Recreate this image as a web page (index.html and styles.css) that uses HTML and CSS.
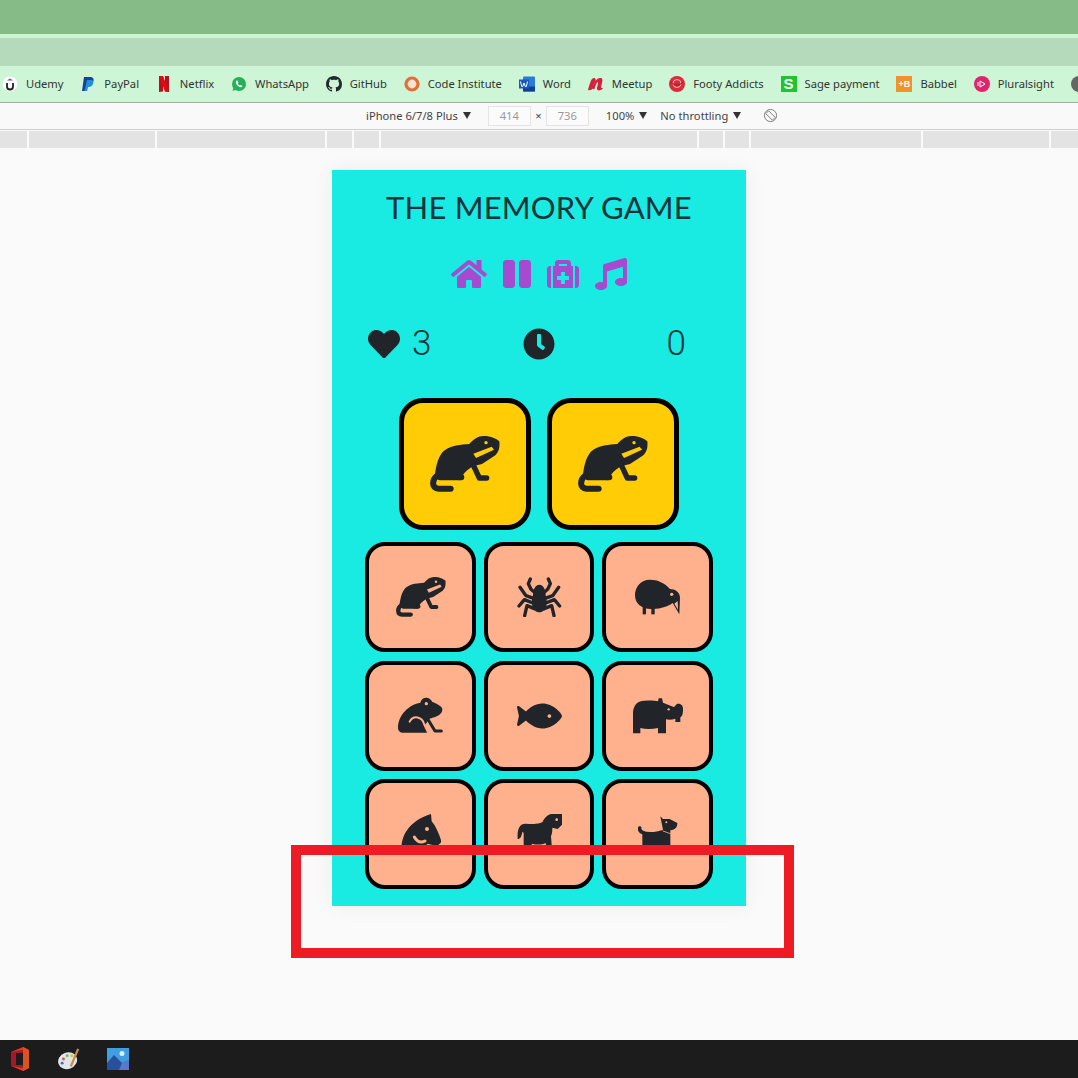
FILE: index.html
```html
<!DOCTYPE html>
<html lang="en">
<head>
  <meta charset="UTF-8">
  <title>The Memory Game</title>
  <link rel="stylesheet" href="styles.css">
</head>
<body>

  <svg class="defs" width="0" height="0">
    <symbol id="otter" viewBox="120 138 210 168">
      <path d="M280 138C264 138 250 148 238 162C212 164 184 166 165 180C147 193 138 222 134 262L210 271C222 244 240 234 252 228L276 222L316 196C326 186 330 174 328 154C318 146 305 138 280 138Z"/>
      <path class="limb" stroke-width="18" d="M182 296H145C125 296 125 270 140 258M150 262H214"/>
      <path class="limb" stroke-width="16" d="M245 215L268 264H290"/>
      <path class="cut" d="M250 191L305 170L312 179L258 204Z"/>
      <circle class="cut" cx="288" cy="158" r="5"/>
    </symbol>
  </svg>

  <div class="topbar"></div>
  <div class="tabbar"></div>

  <div class="bookmarks">
    <div class="bm"><svg viewBox="0 0 16 16"><circle cx="8" cy="8" r="7.500" fill="#fff"/><path d="M5 7v3.500a3 3 0 0 0 6 0V7" fill="none" stroke="#222" stroke-width="1.800"/><path d="M8 2.500L11 4.500H5Z" fill="#8a3ab9"/></svg><span>Udemy</span></div>
    <div class="bm"><svg viewBox="0 0 16 16"><path d="M4 1h6c3 0 4 2 3.500 4-.5 2.500-2.500 3.500-5 3.500H7L6 15H2Z" fill="#1a3f9c"/><path d="M7 4h5c1.500 1 1.500 2.500 1 4-.5 2-2.500 3-4.500 3H8l-.8 4H4.500Z" fill="#1f90d8"/></svg><span>PayPal</span></div>
    <div class="bm"><svg viewBox="0 0 16 16"><path d="M3 0h4l2 7V0h4v16l-4-.6L7 8v7.600L3 16Z" fill="#b5121b"/><path d="M3 0h4l6 16-4-.6Z" fill="#e50914"/></svg><span>Netflix</span></div>
    <div class="bm"><svg viewBox="0 0 16 16"><circle cx="8" cy="8" r="7" fill="#25b15a"/><path d="M1.500 15l1.200-4.500 2.800 3Z" fill="#25b15a"/><path d="M5.500 4.500c-1.500 1.500-.5 3.500 1 5s3.500 2.500 5 1l-1.500-1.500-1.200.6c-1-.5-1.500-1-2-2l.6-1.200L6.500 4.500Z" fill="#fff"/></svg><span>WhatsApp</span></div>
    <div class="bm"><svg viewBox="0 0 16 16"><path fill="#24292e" d="M8 0C3.580 0 0 3.580 0 8c0 3.540 2.290 6.530 5.470 7.590.4.070.55-.17.55-.38 0-.19-.01-.82-.01-1.490-2.010.37-2.530-.49-2.690-.94-.09-.23-.48-.94-.82-1.130-.28-.15-.68-.52-.01-.53.63-.01 1.080.58 1.230.82.72 1.210 1.870.87 2.330.66.07-.52.28-.87.51-1.070-1.780-.2-3.640-.89-3.640-3.950 0-.87.31-1.590.82-2.150-.08-.2-.36-1.020.08-2.120 0 0 .67-.21 2.200.82.640-.18 1.320-.27 2-.27s1.360.09 2 .27c1.530-1.040 2.200-.82 2.200-.82.44 1.100.16 1.920.08 2.120.51.56.82 1.270.82 2.150 0 3.070-1.870 3.750-3.650 3.950.29.25.54.73.54 1.480 0 1.070-.01 1.930-.01 2.200 0 .21.15.46.55.38A8.010 8.010 0 0 0 16 8c0-4.420-3.580-8-8-8z"/></svg><span>GitHub</span></div>
    <div class="bm"><svg viewBox="0 0 16 16"><circle cx="8" cy="8" r="6" fill="#fbe3cf" stroke="#e0703a" stroke-width="3.200"/></svg><span>Code Institute</span></div>
    <div class="bm"><svg viewBox="0 0 16 16"><rect x="4" y="0.500" width="12" height="15" rx="1" fill="#2b7cd3"/><rect x="4" y="10.500" width="12" height="5" fill="#103f91"/><rect x="0" y="3.500" width="10" height="9" fill="#185abd"/><path d="M1.500 5.500l1.200 5h1l1.300-3.500 1.300 3.500h1l1.200-5" fill="none" stroke="#fff" stroke-width="1"/></svg><span>Word</span></div>
    <div class="bm"><svg viewBox="0 0 16 16"><path d="M0 14C2 7 3 2 6 2c1.500 0 2 1.500 1.700 3C9 2.500 11 1.500 13 2c2 .7 1.500 3 1 5l-1 4c-.2 1 .5 1.300 2 1-1 2.500-5.500 3.500-6 1-.3-1.500 1.500-6 1-7-.7-.5-2.500 3-3.500 7-1.500.5-2.200 0-2-1.500L7 6c-1 1-2 5-3 7.500-1.500.8-3.500 1-4 .5Z" fill="#d3213f"/></svg><span>Meetup</span></div>
    <div class="bm"><svg viewBox="0 0 16 16"><circle cx="8" cy="8" r="8" fill="#d92b3a"/><circle cx="8" cy="7.500" r="4" fill="none" stroke="#f6b9bd" stroke-width="1"/><path d="M2 6c3 4 9 4 12 0" fill="none" stroke="#a81622" stroke-width="1"/></svg><span>Footy Addicts</span></div>
    <div class="bm"><div class="logo-tile sage">S</div><span>Sage payment</span></div>
    <div class="bm"><div class="logo-tile babbel">+B</div><span>Babbel</span></div>
    <div class="bm"><svg viewBox="0 0 16 16"><circle cx="8" cy="8" r="8" fill="#e0246c"/><path d="M6 5l5 3-5 3Z" fill="none" stroke="#fff" stroke-width="1"/><path d="M4 6v4" stroke="#fff" stroke-width="1"/></svg><span>Pluralsight</span></div>
    <div class="bm"><svg viewBox="0 0 16 16"><circle cx="8" cy="8" r="8" fill="#666"/></svg></div>
  </div>

  <div class="devbar">
    <span>iPhone 6/7/8 Plus</span><i class="caret"></i>
    <span class="dim-box first">414</span>
    <span class="times">×</span>
    <span class="dim-box">736</span>
    <span class="zoom-val">100%</span><i class="caret"></i>
    <span class="throttle">No throttling</span><i class="caret"></i>
    <svg class="rotate" viewBox="0 0 16 16"><circle cx="8" cy="8" r="6.500" fill="none" stroke="#777"/><path d="M3 6L6 3L13 10L10 13Z" fill="#f9f9f9" stroke="#777"/></svg>
  </div>

  <div class="ruler">
    <b style="width:27px"></b><b style="width:126px"></b><b style="width:168px"></b><b style="width:25px"></b><b style="width:25px"></b><b style="width:316px"></b><b style="width:24px"></b><b style="width:24px"></b><b style="width:170px"></b><b style="width:126px"></b><b style="flex:1"></b>
  </div>

  <main class="viewport">
    <section class="phone">
      <h1 class="title">THE MEMORY GAME</h1>

      <div class="controls">
        <svg class="ctl" width="36" height="32" viewBox="0 0 576 512"><path d="M280.37 148.26L96 300.110V464a16 16 0 0 0 16 16l112.060-.29a16 16 0 0 0 15.920-16V368a16 16 0 0 1 16-16h64a16 16 0 0 1 16 16v95.640a16 16 0 0 0 16 16.050L464 480a16 16 0 0 0 16-16V300L295.670 148.260a12.190 12.190 0 0 0-15.300 0zM571.600 251.470L488 182.560V44.050a12 12 0 0 0-12-12h-56a12 12 0 0 0-12 12v72.610L318.470 43a48 48 0 0 0-61 0L4.340 251.470a12 12 0 0 0-1.600 16.900l25.500 31A12 12 0 0 0 45.150 301l235.220-193.740a12.190 12.190 0 0 1 15.300 0L530.900 301a12 12 0 0 0 16.900-1.600l25.500-31a12 12 0 0 0-1.700-16.930z"/></svg>
        <svg class="ctl" width="28" height="32" viewBox="0 0 448 512"><path d="M144 479H48c-26.500 0-48-21.500-48-48V79c0-26.500 21.500-48 48-48h96c26.500 0 48 21.500 48 48v352c0 26.500-21.500 48-48 48zm304-48V79c0-26.500-21.500-48-48-48h-96c-26.500 0-48 21.500-48 48v352c0 26.500 21.500 48 48 48h96c26.500 0 48-21.500 48-48z"/></svg>
        <svg class="ctl" width="32" height="32" viewBox="0 0 512 512"><path d="M96 480h320V128h-32V80c0-26.510-21.490-48-48-48H176c-26.510 0-48 21.490-48 48v48H96v352zm96-384h128v32H192V96zm160 248c0 4.418-3.582 8-8 8h-56v56c0 4.418-3.582 8-8 8h-48c-4.418 0-8-3.582-8-8v-56h-56c-4.418 0-8-3.582-8-8v-48c0-4.418 3.582-8 8-8h56v-56c0-4.418 3.582-8 8-8h48c4.418 0 8 3.582 8 8v56h56c4.418 0 8 3.582 8 8v48zm160-168v256c0 26.510-21.490 48-48 48h-16V128h16c26.510 0 48 21.490 48 48zM64 480H48c-26.510 0-48-21.490-48-48V176c0-26.510 21.490-48 48-48h16v352z"/></svg>
        <svg class="ctl" width="32" height="32" viewBox="0 0 512 512"><path d="M470.380 1.510L150.410 96A32 32 0 0 0 128 126.510v261.410A139 139 0 0 0 96 384c-53 0-96 28.660-96 64s43 64 96 64 96-28.660 96-64V214.320l256-75v184.610a138.400 138.400 0 0 0-32-3.930c-53 0-96 28.660-96 64s43 64 96 64 96-28.650 96-64V32a32 32 0 0 0-41.620-30.490z"/></svg>
      </div>

      <div class="stats">
        <div class="lives">
          <svg width="32" height="32" viewBox="0 0 512 512"><path d="M462.300 62.600C407.500 15.900 326 24.300 275.700 76.200L256 96.500l-19.700-20.300C186.100 24.300 104.500 15.900 49.700 62.600c-62.800 53.600-66.100 149.800-9.900 207.900l193.500 199.800c12.500 12.900 32.800 12.900 45.300 0l193.500-199.800c56.300-58.100 53-154.300-9.800-207.900z"/></svg>
          <span class="num">3</span>
        </div>
        <svg width="32" height="32" viewBox="0 0 512 512"><path d="M256 8C119 8 8 119 8 256s111 248 248 248 248-111 248-248S393 8 256 8zm92.490 313l-20 25a16 16 0 0 1-22.490 2.500l-67-49.720a40 40 0 0 1-15-31.230V112a16 16 0 0 1 16-16h32a16 16 0 0 1 16 16v144l58 42.500a16 16 0 0 1 2.490 22.500z"/></svg>
        <span class="num score">0</span>
      </div>

      <div class="pair">
        <div class="card big"><svg width="70" height="56"><use href="#otter"/></svg></div>
        <div class="card big"><svg width="70" height="56"><use href="#otter"/></svg></div>
      </div>

      <div class="deck">
        <div class="card"><svg width="50" height="40"><use href="#otter"/></svg></div>

        <div class="card">
          <svg width="45" height="40" viewBox="470 110 135 120">
            <path d="M537 133C550 133 556 150 556 165C560 178 560 190 558 198C555 210 545 216 537 216C529 216 519 210 516 198C514 190 514 178 518 165C518 150 524 133 537 133Z"/>
            <path class="limb" stroke-width="10" d="M525 158L512 147L504 130L510 116M549 158L562 147L570 130L564 116M520 174L497 166L479 141M554 174L577 166L595 141M518 188L492 178L476 197M556 188L582 178L598 197M522 205L500 196L493 226M552 205L574 196L581 226"/>
          </svg>
        </div>

        <div class="card">
          <svg width="45" height="40" viewBox="825 110 135 120">
            <path d="M870 118C842 118 825 140 825 165C825 192 848 208 878 206C905 205 925 198 938 188L958 222L960 172C960 155 945 146 930 146C915 128 892 118 870 118Z"/>
            <path class="cut" d="M943 190L953 182L954 208Z"/>
            <rect x="848" y="198" width="10" height="24"/>
            <rect x="874" y="198" width="10" height="24"/>
            <circle class="cut" cx="935" cy="162" r="5"/>
          </svg>
        </div>

        <div class="card">
          <svg width="45" height="40" viewBox="115 110 135 120">
            <path d="M200 115C190 115 185 120 182 130C150 135 115 165 115 205C115 215 122 220 130 220H208L196 196L210 178C235 172 248 165 248 150C248 140 225 130 218 128C214 120 208 115 200 115Z"/>
            <path class="limb" stroke-width="9" d="M206 182L226 215H245"/>
            <path class="cut-line" stroke-width="6" d="M150 187C160 167 188 170 194 196L206 221"/>
            <circle class="cut" cx="200" cy="133" r="5"/>
          </svg>
        </div>

        <div class="card">
          <svg width="45" height="40" viewBox="0 0 576 512"><path d="M327.100 96c-89.970 0-168.540 54.770-212.270 101.630L27.500 131.580c-12.130-9.180-30.240.6-27.140 14.660L24.540 256 .35 365.770c-3.100 14.060 15.010 23.830 27.140 14.660l87.330-66.050C158.550 361.230 237.130 416 327.100 416 464.560 416 576 288 576 256S464.560 96 327.100 96zm87.430 184c-13.250 0-24-10.750-24-24 0-13.260 10.750-24 24-24 13.260 0 24 10.740 24 24 0 13.250-10.750 24-24 24z"/></svg>
        </div>

        <div class="card">
          <svg width="50" height="40" viewBox="818 108 150 120">
            <path d="M852 122C830 122 818 138 818 160V220H840V204C855 208 875 208 893 204V220H917V178C925 180 935 180 945 176V186H960V172C967 168 968 160 968 146C968 134 958 130 950 132C945 135 945 140 940 141L908 128L905 115H895L893 124C880 120 868 122 852 122Z"/>
            <circle class="cut" cx="925" cy="148" r="3.500"/>
          </svg>
        </div>

        <div class="card">
          <svg width="40" height="40" viewBox="360 103 120 120">
            <path d="M450 103L452 125C465 140 475 165 482 187L468 200L440 192C430 205 410 212 396 222H362C356 172 382 124 450 103Z"/>
            <path class="cut-line" stroke-width="9" d="M400 172C408 186 420 190 432 184"/>
            <circle class="cut" cx="438" cy="148" r="6"/>
          </svg>
        </div>

        <div class="card">
          <svg width="45" height="40" viewBox="710 103 135 120">
            <path d="M845 103L818 102C800 104 792 116 786 128C770 136 750 132 735 132C718 132 710 148 712 178C720 178 724 170 726 156L730 160V195L742 222H758L754 192C770 196 785 196 796 190L802 222H816L812 170C816 160 816 152 816 144L832 148L845 135Z"/>
            <circle class="cut" cx="829" cy="120" r="4"/>
          </svg>
        </div>

        <div class="card">
          <svg width="40" height="40" viewBox="1075 103 120 120">
            <path d="M1142 110L1150 118H1170L1193 130C1193 142 1188 150 1172 152V190L1174 222H1155V205H1105V222H1088V155C1110 158 1130 158 1150 150Z"/>
            <path class="limb" stroke-width="11" d="M1092 160C1082 156 1078 152 1080 145"/>
            <path class="cut-line" stroke-width="2.500" d="M1150 154L1172 162"/>
            <circle class="cut" cx="1160" cy="128" r="3"/>
          </svg>
        </div>
      </div>
    </section>

    <div class="highlight"></div>
  </main>

  <footer class="taskbar">
    <svg width="20" height="24" viewBox="0 0 20 24"><path d="M1 5L13 0L19 3V21L13 24L1 19Z" fill="#d83b28"/><path d="M13 0L19 3V21L13 24Z" fill="#d9541e"/><path d="M1 5L13 3V21L1 19Z" fill="#a3182a"/><rect x="6" y="6" width="7" height="12" fill="#1c1c1c"/></svg>
    <svg width="22" height="24" viewBox="0 0 24 24"><ellipse cx="10.500" cy="14" rx="10.500" ry="9" fill="#dfe6ec" transform="rotate(-20 10 14)"/><circle cx="6" cy="12" r="1.600" fill="#d9534f"/><circle cx="10" cy="8.500" r="1.600" fill="#6fbf4a"/><circle cx="15" cy="8.500" r="1.600" fill="#e8b93c"/><circle cx="4.500" cy="16.500" r="1.600" fill="#3f6fb5"/><path d="M22 1L14 20" stroke="#c58b4a" stroke-width="2.500"/></svg>
    <svg width="22" height="22" viewBox="0 0 22 22"><rect width="22" height="22" fill="#3f9fe0"/><path d="M0 22V15L7 7L15 15L22 12V22Z" fill="#2a4f9c"/><path d="M15 15L22 12V22H12Z" fill="#5c77cc"/><circle cx="15" cy="5.500" r="2.500" fill="#d8eefb"/></svg>
  </footer>

</body>
</html>
```

FILE: styles.css
```css
html, body {
  margin: 0;
  padding: 0;
  height: 100%;
  overflow: hidden;
}
body {
  display: flex;
  flex-direction: column;
  font-family: "Noto Sans", "Open Sans", sans-serif;
  font-size: 11.2px;
  color: #333;
  background: #fafafa;
}
.defs {
  position: absolute;
}

/* browser chrome */
.topbar {
  height: 34px;
  background: #86ba86;
  border-bottom: 4px solid #ccf5d4;
}
.tabbar {
  height: 28px;
  background: #b5d9bb;
}
.bookmarks {
  display: flex;
  align-items: center;
  gap: 16.8px;
  height: 35px;
  padding: 0 0 1px 2px;
  background: #cdf5d6;
  border-bottom: 1px solid #a4b0a6;
  white-space: nowrap;
  overflow: hidden;
}
.bm {
  display: flex;
  align-items: center;
  gap: 8px;
  flex-shrink: 0;
}
.bm svg {
  width: 16px;
  height: 16px;
}
.logo-tile {
  width: 16px;
  height: 16px;
  color: #fff;
  font-family: "Liberation Sans", sans-serif;
  font-weight: 700;
  text-align: center;
  line-height: 16px;
}
.sage {
  background: #1fc42f;
  font-size: 15px;
}
.babbel {
  background: #f0932b;
  font-size: 9px;
}
.devbar {
  display: flex;
  align-items: center;
  height: 25px;
  padding: 0 0 1px 366px;
  background: #f9f9f9;
  border-bottom: 1px solid #cfcfcf;
  color: #444;
}
.caret {
  width: 0;
  height: 0;
  margin-left: 5px;
  border-left: 4px solid transparent;
  border-right: 4px solid transparent;
  border-top: 7px solid #333;
}
.dim-box {
  width: 41px;
  height: 18px;
  border: 1px solid #e4e4e4;
  background: #fbfbfb;
  color: #999;
  text-align: center;
  line-height: 18px;
}
.first {
  margin-left: 17px;
}
.times {
  width: 15px;
  text-align: center;
}
.zoom-val {
  margin-left: 17px;
}
.throttle {
  margin-left: 13px;
}
.rotate {
  width: 15px;
  height: 15px;
  margin-left: 22px;
}
.ruler {
  display: flex;
  gap: 2px;
  height: 17px;
  margin-top: 1px;
}
.ruler b {
  background: #e3e3e3;
}

/* game page */
.viewport {
  position: relative;
  flex: 1;
  display: flex;
  justify-content: center;
  align-items: flex-start;
  padding-top: 22px;
}
.phone {
  display: flex;
  flex-direction: column;
  align-items: center;
  width: 414px;
  height: 736px;
  padding-top: 18px;
  box-sizing: border-box;
  background: #19ebe3;
  box-shadow: 0 0 20px rgba(0, 0, 0, 0.06);
  color: #212529;
}
.phone svg {
  fill: #212529;
}
.title {
  height: 38px;
  margin: 0 0 32px;
  font-family: Lato, sans-serif;
  font-size: 31px;
  font-weight: 400;
  line-height: 38px;
  letter-spacing: 0.2px;
  color: #10343c;
  white-space: nowrap;
}
.controls {
  display: flex;
  gap: 16px;
  height: 32px;
  margin-bottom: 38px;
}
.phone .ctl {
  fill: #a64bd0;
}
.stats {
  display: grid;
  grid-template-columns: 1fr auto 1fr;
  align-items: center;
  width: 100%;
  height: 32px;
  padding: 0 36px;
  margin-bottom: 38px;
  box-sizing: border-box;
}
.lives {
  display: flex;
  align-items: center;
  gap: 12px;
}
.num {
  font-family: Roboto, sans-serif;
  font-size: 35px;
  font-weight: 300;
  line-height: 32px;
  color: #10343c;
}
.score {
  justify-self: end;
  margin-right: 24px;
}
.pair {
  display: flex;
  gap: 16px;
  margin-bottom: 12px;
}
.deck {
  display: grid;
  grid-template-columns: repeat(3, 110.5px);
  grid-auto-rows: 110px;
  gap: 8.500px 8px;
}
.card {
  --card-bg: #ffb08c;
  display: flex;
  align-items: center;
  justify-content: center;
  box-sizing: border-box;
  border: 4px solid #000;
  border-radius: 20px;
  background: var(--card-bg);
}
.big {
  --card-bg: #ffcc05;
  width: 132px;
  height: 132px;
  border-width: 5px;
  border-radius: 24px;
}
.cut {
  fill: var(--card-bg);
}
.cut-line {
  fill: none;
  stroke: var(--card-bg);
  stroke-linecap: round;
}
.limb {
  fill: none;
  stroke: #212529;
  stroke-linecap: round;
  stroke-linejoin: round;
}
.highlight {
  position: absolute;
  left: 291px;
  top: 697px;
  width: 503px;
  height: 113px;
  box-sizing: border-box;
  border: 10px solid #ed1c24;
}

/* windows taskbar */
.taskbar {
  display: flex;
  align-items: center;
  gap: 27.500px;
  height: 38px;
  padding-left: 10px;
  background: #1c1c1c;
}
```
